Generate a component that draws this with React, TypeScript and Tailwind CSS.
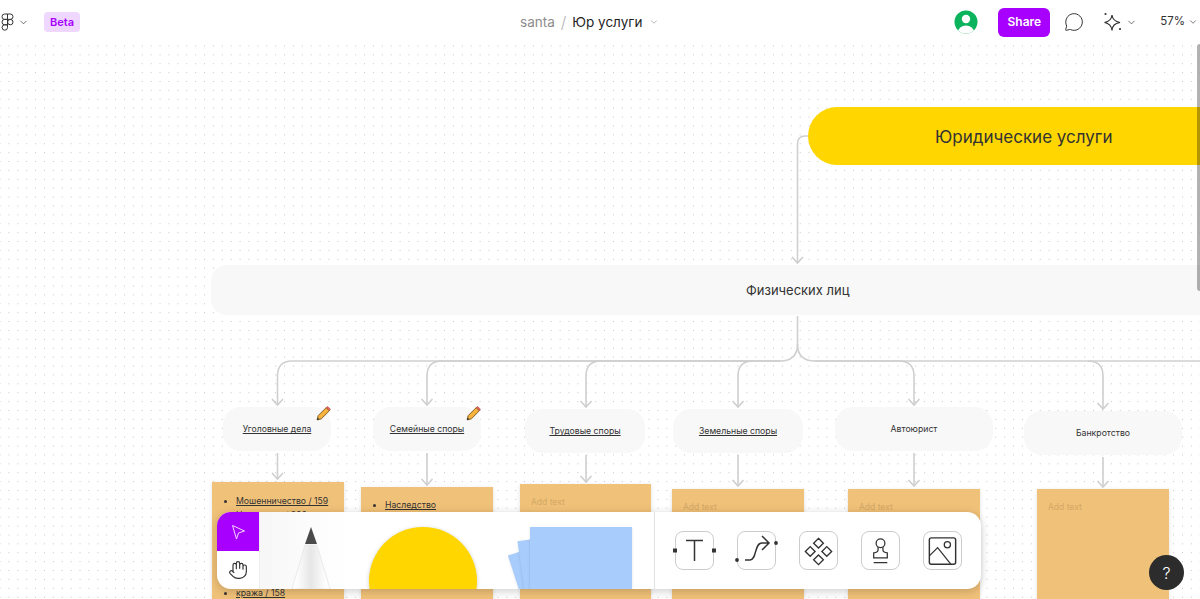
import React from 'react';
import { ChevronDown, MessageCircle } from 'lucide-react';

const FONT = "font-['Inter','Noto_Sans',sans-serif]";

type Node = { label: string; x: number; y: number; w: number; h: number; underline?: boolean; pencil?: boolean };

const NODES: Node[] = [
  { label: 'Уголовные дела', x: 223, y: 407, w: 108, h: 44, underline: true, pencil: true },
  { label: 'Семейные споры', x: 373, y: 407, w: 108, h: 44, underline: true, pencil: true },
  { label: 'Трудовые споры', x: 525, y: 409, w: 120, h: 44, underline: true },
  { label: 'Земельные споры', x: 673, y: 409, w: 130, h: 44, underline: true },
  { label: 'Автоюрист', x: 835, y: 407, w: 158, h: 44 },
  { label: 'Банкротство', x: 1024, y: 411, w: 158, h: 44 },
];

const STICKIES = [
  { x: 212, y: 482, w: 132 },
  { x: 361, y: 487, w: 132 },
  { x: 520, y: 484, w: 131 },
  { x: 672, y: 489, w: 132 },
  { x: 848, y: 489, w: 132 },
  { x: 1037, y: 489, w: 132 },
];

// connector paths of the mind map
const CONNECTORS = [
  'M808 136 H805 Q797.5 136 797.5 144 V263',
  'M797.5 316 V344 Q797.5 361 780 361 H292 Q277.5 361 277.5 376 V405',
  'M780 361 H442 Q427 361 427 376 V405',
  'M780 361 H601 Q586 361 586 376 V407',
  'M780 361 H753 Q738 361 738 376 V407',
  'M797.5 344 Q797.5 361 815 361 H899 Q914 361 914 376 V405',
  'M815 361 H1088 Q1103 361 1103 376 V409',
  'M1088 361 H1200',
  'M277.5 453 V479',
  'M427 453 V485',
  'M586 455 V482',
  'M738 455 V486',
  'M914 453 V486',
  'M1103 457 V487',
];

const ARROWS: [number, number][] = [
  [797.5, 263], [277.5, 405], [427, 405], [586, 407], [738, 407], [914, 405], [1103, 409],
  [277.5, 479], [427, 485], [586, 482], [738, 486], [914, 486], [1103, 487],
];

function Connectors() {
  return (
    <svg width="1200" height="599" className="absolute left-0 top-0" fill="none" stroke="#cfcfcf" strokeWidth="1.6">
      {CONNECTORS.map((d, i) => (
        <path key={i} d={d} />
      ))}
      {ARROWS.map(([x, y], i) => (
        <path key={i} d={`M${x - 5.5} ${y - 6} L${x} ${y} L${x + 5.5} ${y - 6}`} />
      ))}
    </svg>
  );
}

function FigmaLogo() {
  return (
    <svg width="13" height="18" viewBox="0 0 13 18" fill="none" stroke="#333" strokeWidth="1">
      <path d="M6.5 1H3.7a2.7 2.7 0 0 0 0 5.4h2.8zM6.5 1h2.8a2.7 2.7 0 0 1 0 5.4H6.5zM6.5 6.4H3.7a2.7 2.7 0 0 0 0 5.4h2.8zM6.5 11.8H3.7a2.7 2.7 0 1 0 2.8 2.7z" />
      <circle cx="9.3" cy="9.1" r="2.7" />
    </svg>
  );
}

function Sparkles() {
  return (
    <svg width="20" height="20" viewBox="0 0 20 20" fill="none" stroke="#333" strokeWidth="1.2">
      <path d="M9 3 C9.5 7.5 11.500 9.500 17 10.500 C11.500 11.500 9.500 13.500 9 18.500 C8.500 13.500 6.500 11.500 1.500 10.500 C6.500 9.500 8.500 7.500 9 3Z" />
      <circle cx="2.500" cy="2" r="1.100" fill="#333" stroke="none" />
      <circle cx="17" cy="17" r="1.100" fill="#333" stroke="none" />
    </svg>
  );
}

function Header() {
  return (
    <header className="relative z-20 flex h-11 items-center whitespace-nowrap bg-white text-[#333]">
      <div className="flex items-center pl-[1px]">
        <FigmaLogo />
        <ChevronDown size={11} className="ml-[4px]" strokeWidth={1.5} />
      </div>
      <span className="ml-[15px] flex h-5 w-9 items-center justify-center rounded bg-[#f0d7ff] text-[11px] font-semibold text-[#a800ff]">
        Beta
      </span>
      <div className="ml-[440px] flex items-center text-[13.500px]">
        <span className="text-[#8c8c8c]">santa</span>
        <span className="ml-[6px] text-base font-light text-[#b3b3b3]">/</span>
        <span className="ml-[6px] text-[#1e1e1e]">Юр услуги</span>
        <ChevronDown size={10} className="ml-[7px] text-[#8c8c8c]" strokeWidth={1.5} />
      </div>
      <svg width="24" height="24" viewBox="0 0 24 24" className="ml-[295px]">
        <defs>
          <clipPath id="avatar">
            <circle cx="12" cy="12" r="11.500" />
          </clipPath>
        </defs>
        <circle cx="12" cy="12" r="11.500" fill="#0bb35c" />
        <g clipPath="url(#avatar)" fill="#fff">
          <circle cx="12" cy="9" r="4.200" />
          <ellipse cx="12" cy="22" rx="8" ry="6.500" />
        </g>
      </svg>
      <button className="ml-[20px] h-[29px] w-[52px] rounded-md bg-[#a800ff] text-xs font-semibold text-white">Share</button>
      <MessageCircle size={20} strokeWidth={1.2} className="ml-[14px]" />
      <span className="ml-[19px]">
        <Sparkles />
      </span>
      <ChevronDown size={11} strokeWidth={1.5} className="ml-[3px]" />
      <span className="ml-[23px] text-[11.500px]">57%</span>
      <ChevronDown size={10} strokeWidth={1.5} className="ml-[3px]" />
    </header>
  );
}

function Pencil() {
  return (
    <svg width="15" height="15" viewBox="0 0 14 14" className="absolute -top-[1px] right-0">
      <path d="M1 13 L2 9 L9.500 1.500 L12.500 4.500 L5 12Z" fill="#f7b23b" stroke="#6b4e1c" strokeWidth="0.800" />
      <path d="M1 13 L1.600 10.800 L3.200 12.400Z" fill="#333" />
      <path d="M9.500 1.500 L11 0.500 L13.500 3 L12.500 4.500Z" fill="#e8605a" stroke="#a8403c" strokeWidth="0.500" />
    </svg>
  );
}

function Canvas() {
  return (
    <div className="absolute inset-0 bg-white bg-[radial-gradient(circle,#c4c4c4_0.5px,transparent_0.8px)] bg-[size:8.900px_8.900px] bg-[position:-4.450px_5.950px]">
      {STICKIES.map((s, i) => (
        <div
          key={i}
          className="absolute h-[200px] bg-[#f0c178] pl-[11px] pt-[12px] text-[8.500px] text-[#d3a866] shadow-[0_1px_4px_rgba(0,0,0,0.12)]"
          style={{ left: s.x, top: s.y, width: s.w }}
        >
          {i > 1 && 'Add text'}
          {i === 0 && (
            <ul className="list-disc pl-[13px] text-[8.700px] leading-[14px] text-[#333]">
              <li className="underline">Мошенничество / 159</li>
              <li className="underline">Налоговые / 200</li>
              <li className="mt-[64px] underline">кража / 158</li>
            </ul>
          )}
          {i === 1 && (
            <ul className="-mt-[1px] list-disc pl-[13px] text-[8.700px] leading-[14px] text-[#333]">
              <li className="underline">Наследство</li>
            </ul>
          )}
        </div>
      ))}

      <Connectors />

      <div className="absolute left-[808px] top-[107px] flex h-[58px] w-[430px] items-center whitespace-nowrap rounded-[29px] bg-[#ffd600] pl-[127px] pt-[3px] text-[17px] text-[#333]">
        Юридические услуги
      </div>
      <div className="absolute left-[211px] top-[265px] flex h-[50px] w-[1172px] items-center whitespace-nowrap rounded-2xl bg-[#f8f8f8] pl-[535px] pt-[1px] text-[13px] text-[#333]">
        Физических лиц
      </div>

      {NODES.map((n) => (
        <div
          key={n.label}
          className="absolute flex items-center justify-center whitespace-nowrap rounded-[18px] bg-[#f8f8f8] pt-[2px] text-[8.700px] text-[#333]"
          style={{ left: n.x, top: n.y, width: n.w, height: n.h }}
        >
          <span className={n.underline ? 'underline' : ''}>{n.label}</span>
          {n.pencil && <Pencil />}
        </div>
      ))}

      {/* scrollbar */}
      <div className="absolute right-0 top-[44px] h-[247px] w-[3px] rounded-l bg-black/30" />
    </div>
  );
}

function Toolbar() {
  return (
    <div className="absolute left-[217px] top-[512px] z-10 flex h-[77px] w-[764px] overflow-hidden rounded-[14px] bg-white shadow-[0_2px_10px_rgba(0,0,0,0.2)]">
      <div className="flex w-[43px] flex-col border-r border-[#eeeeee]">
        <div className="flex h-[39px] items-center justify-center bg-[#a800ff]">
          <svg width="16" height="16" viewBox="0 0 16 16" fill="none" stroke="#f3d9ff" strokeWidth="1">
            <path d="M2.500 1.500 L14.500 7 L8.500 9 L6.500 15Z" />
          </svg>
        </div>
        <div className="flex flex-1 items-center justify-center">
          <svg width="20" height="20" viewBox="0 0 24 24" fill="none" stroke="#333" strokeWidth="1.400" strokeLinecap="round" strokeLinejoin="round">
            <path d="M18 11V6a2 2 0 0 0-4 0M14 10V4a2 2 0 0 0-4 0v2M10 10.500V6a2 2 0 0 0-4 0v8M18 8a2 2 0 1 1 4 0v6a8 8 0 0 1-8 8h-2c-2.800 0-4.500-.9-6-2.400L2.400 16a2 2 0 0 1 2.800-2.800L7 15" />
          </svg>
        </div>
      </div>
      <div className="relative w-[395px] shrink-0 overflow-hidden border-r border-[#e2e2e2] bg-gradient-to-r from-[#f7f7f7] to-white to-[22%]">
        {/* pen */}
        <svg width="60" height="62" viewBox="0 0 60 62" className="absolute left-[21px] top-[15px]">
          <defs>
            <linearGradient id="penBody" x1="0" y1="0" x2="1" y2="0">
              <stop offset="0.1" stopColor="#ffffff" />
              <stop offset="0.5" stopColor="#e6e6e6" />
              <stop offset="0.9" stopColor="#ffffff" />
            </linearGradient>
          </defs>
          <path d="M24 18 H36 L49 62 H11Z" fill="url(#penBody)" stroke="#e6e6e6" strokeWidth="0.800" />
          <path d="M30 0 L36 17 H24Z" fill="#4a4a4a" />
        </svg>
        {/* shape */}
        <div className="absolute left-[109px] top-[15px] h-[108px] w-[108px] rounded-full bg-[#ffd600] shadow-[0_1px_4px_rgba(0,0,0,0.2)]" />
        {/* sticky stack */}
        <div className="absolute left-[257px] top-[31px] h-[70px] w-[70px] -rotate-[18deg] bg-[#a8ccfb] shadow-sm" />
        <div className="absolute left-[262px] top-[24px] h-[70px] w-[70px] -rotate-[8deg] bg-[#a8ccfb] shadow-sm" />
        <div className="absolute left-[270px] top-[15px] h-[70px] w-[102px] bg-[#a8ccfb] shadow-sm" />
      </div>
      <div className="flex flex-1 items-center gap-[23px] pl-[20px]">
        <ToolButton>
          <svg width="37" height="37" viewBox="0 0 37 37" fill="none" stroke="#333" strokeWidth="1.500" className="overflow-visible">
            <path d="M10 8.500H27M18.500 8.500V29" />
            <rect x="-3" y="16.500" width="4" height="4" fill="#333" stroke="none" />
            <rect x="36" y="16.500" width="4" height="4" fill="#333" stroke="none" />
          </svg>
        </ToolButton>
        <ToolButton>
          <svg width="37" height="37" viewBox="0 0 37 37" fill="none" stroke="#333" strokeWidth="1.500" className="overflow-visible">
            <path d="M7 28H12C19 28 16 11 24 11H31M24 4L31 11L24 18" />
            <circle cx="-1" cy="28" r="1.900" fill="#333" stroke="none" />
            <circle cx="38" cy="11" r="1.900" fill="#333" stroke="none" />
          </svg>
        </ToolButton>
        <ToolButton>
          <svg width="38" height="38" viewBox="0 0 38 38" fill="none" stroke="#333" strokeWidth="1.400">
            <path d="M19 6L24 11L19 16L14 11ZM10.500 14.500L15.500 19.500L10.500 24.500L5.500 19.500ZM27.500 14.500L32.500 19.500L27.500 24.500L22.500 19.500ZM19 23L24 28L19 33L14 28Z" />
          </svg>
        </ToolButton>
        <ToolButton>
          <svg width="38" height="38" viewBox="0 0 38 38" fill="none" stroke="#333" strokeWidth="1.300">
            <circle cx="19" cy="11" r="4.500" />
            <path d="M16.500 15V18C16.500 20 15 20.500 12 21V26H26V21C23 20.500 21.500 20 21.500 18V15M12 31H26" />
          </svg>
        </ToolButton>
        <ToolButton>
          <svg width="38" height="38" viewBox="0 0 38 38" fill="none" stroke="#333" strokeWidth="1.300">
            <rect x="5.500" y="5.500" width="27" height="27" rx="2" strokeWidth="1.500" />
            <path d="M5.500 24L14 15.500L27.500 32.500" />
            <circle cx="24" cy="12.500" r="3.200" />
          </svg>
        </ToolButton>
      </div>
    </div>
  );
}

function ToolButton({ children }: { children: React.ReactNode }) {
  return (
    <div className="flex h-[39px] w-[39px] items-center justify-center rounded-lg border border-[#cccccc] bg-white">
      {children}
    </div>
  );
}

export default function App() {
  return (
    <div className={`relative h-[599px] w-[1200px] overflow-hidden bg-white ${FONT}`}>
      <Canvas />
      <Header />
      <Toolbar />
      <button className="absolute left-[1149px] top-[555px] z-10 flex h-[35px] w-[35px] items-center justify-center rounded-full bg-[#2c2c2c] text-base font-light text-white">
        ?
      </button>
    </div>
  );
}
